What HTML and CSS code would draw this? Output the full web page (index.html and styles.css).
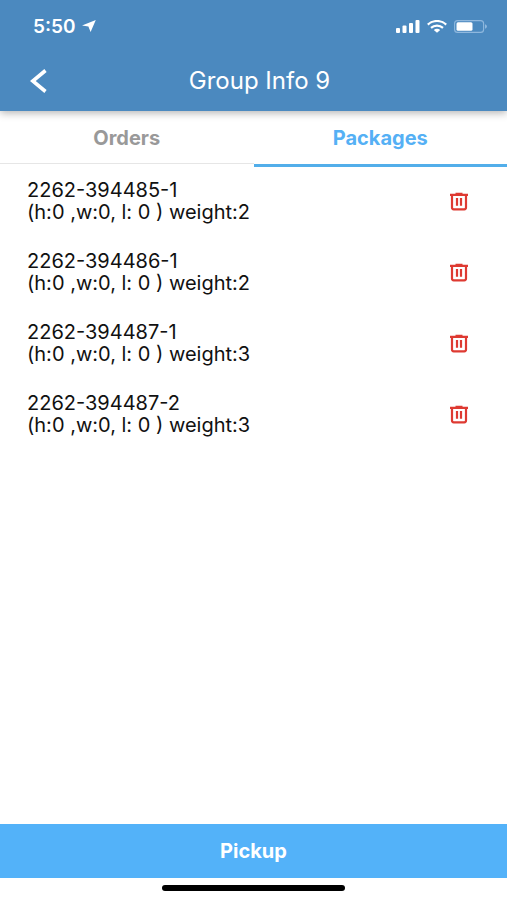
FILE: index.html
```html
<!DOCTYPE html>
<html lang="en">
<head>
    <meta charset="UTF-8">
    <meta name="viewport" content="width=device-width, initial-scale=1.0">
    <title>Group Info 9</title>
    <link rel="stylesheet" href="styles.css">
</head>
<body>
    <!-- Shared icon for the package rows -->
    <svg class="sprite" aria-hidden="true">
        <symbol id="trash" viewBox="0 0 20 20">
            <path d="M1 3.8h18M6.5 2.8h7M3 4v12.6a1.7 1.7 0 0 0 1.7 1.7h10.6a1.7 1.7 0 0 0 1.7-1.7V4M8 7v7.8M12 7v7.8" fill="none" stroke="currentColor" stroke-width="2.2"/>
        </symbol>
    </svg>

    <header class="header">
        <div class="status-bar">
            <div class="status-time">
                <span>5:50</span>
                <svg width="14" height="12" viewBox="0 0 14 12"><path d="M13.8 0 0 5.6 6.4 6.6 8.6 12z" fill="#fff"/></svg>
            </div>
            <div class="status-icons">
                <svg width="24" height="13" viewBox="0 0 24 13" fill="#fff">
                    <rect x="0" y="8" width="4" height="5" rx="1"/>
                    <rect x="6.5" y="5.5" width="4" height="7.5" rx="1"/>
                    <rect x="13" y="3" width="4" height="10" rx="1"/>
                    <rect x="19.5" y="0" width="4" height="13" rx="1"/>
                </svg>
                <svg width="20" height="13" viewBox="0 0 20 13" fill="none" stroke="#fff" stroke-width="2.2">
                    <path d="M0.8 4.6C6-0.2 14-0.2 19.2 4.6M4 7.9C7.4 4.9 12.6 4.9 16 7.9"/>
                    <path d="M6.8 9.9C8.6 8.4 11.4 8.4 13.2 9.9L10 12.8z" fill="#fff" stroke="none"/>
                </svg>
                <svg width="34" height="13" viewBox="0 0 34 13">
                    <rect x="0.6" y="0.6" width="29" height="11.8" rx="3" fill="none" stroke="#8fb8de" stroke-width="1.1"/>
                    <rect x="2.5" y="2.2" width="16" height="8.6" rx="1.5" fill="#fff"/>
                    <path d="M31 4.3c2.6 0.8 2.6 3.6 0 4.4z" fill="#8fb8de"/>
                </svg>
            </div>
        </div>
        <div class="nav-bar">
            <button class="back-btn" type="button" aria-label="Back">
                <svg width="18" height="24" viewBox="0 0 18 24"><path d="M15.5 1.5 2.8 12l12.7 10.5" fill="none" stroke="#fff" stroke-width="3.6"/></svg>
            </button>
            <h1 class="title">Group Info 9</h1>
        </div>
    </header>

    <nav class="tabs">
        <button class="tab" type="button">Orders</button>
        <button class="tab active" type="button">Packages</button>
    </nav>

    <main class="packages">
        <ul class="package-list">
            <li class="package">
                <p>2262-394485-1<br>(h:0 ,w:0, l: 0 ) weight:2</p>
                <button class="delete-btn" type="button" aria-label="Delete 2262-394485-1"><svg width="20" height="20"><use href="#trash"/></svg></button>
            </li>
            <li class="package">
                <p>2262-394486-1<br>(h:0 ,w:0, l: 0 ) weight:2</p>
                <button class="delete-btn" type="button" aria-label="Delete 2262-394486-1"><svg width="20" height="20"><use href="#trash"/></svg></button>
            </li>
            <li class="package">
                <p>2262-394487-1<br>(h:0 ,w:0, l: 0 ) weight:3</p>
                <button class="delete-btn" type="button" aria-label="Delete 2262-394487-1"><svg width="20" height="20"><use href="#trash"/></svg></button>
            </li>
            <li class="package">
                <p>2262-394487-2<br>(h:0 ,w:0, l: 0 ) weight:3</p>
                <button class="delete-btn" type="button" aria-label="Delete 2262-394487-2"><svg width="20" height="20"><use href="#trash"/></svg></button>
            </li>
        </ul>
    </main>

    <footer class="footer">
        <button class="pickup-btn" type="button">Pickup</button>
        <div class="home-indicator"></div>
    </footer>
</body>
</html>
```
FILE: styles.css
```css
* {
    box-sizing: border-box;
}

body {
    margin: 0;
    min-height: 100vh;
    display: flex;
    flex-direction: column;
    font-family: Inter, "Liberation Sans", sans-serif;
    font-size: 20px;
    color: #111;
    background-color: #fff;
}

button {
    padding: 0;
    border: none;
    background: none;
    font: inherit;
    color: inherit;
    cursor: pointer;
}

svg {
    display: block;
}

.sprite {
    position: absolute;
    width: 0;
    height: 0;
}

/* Header */
.header {
    position: relative; /* keeps the shadow above the tabs */
    background-color: #4b89bf;
    color: #fff;
    box-shadow: 0 2px 8px rgba(0, 0, 0, 0.3);
}

.status-bar {
    display: flex;
    justify-content: space-between;
    align-items: center;
    height: 52px;
    padding: 0 19px 0 33px;
}

.status-time {
    display: flex;
    align-items: center;
    gap: 6px;
    font-size: 19px;
    font-weight: 600;
}

.status-icons {
    display: flex;
    gap: 7px;
}

.nav-bar {
    display: grid;
    grid-template-columns: 60px 1fr 48px;
    align-items: center;
    height: 59px;
    padding-bottom: 2px;
}

.back-btn {
    padding-left: 30px;
}

.title {
    margin: 0;
    font-size: 24px;
    font-weight: 400;
    text-align: center;
}

/* Tabs */
.tabs {
    display: flex;
    height: 56px;
}

.tab {
    flex: 1;
    padding-top: 1px;
    border-bottom: 3px solid transparent;
    box-shadow: inset 0 -1px #e6e6e6;
    font-weight: 700;
    color: #999;
}

.tab.active {
    border-bottom-color: #52aeea;
    box-shadow: none;
    color: #55b0f5;
}

/* Package rows */
.packages {
    flex: 1;
}

.package-list {
    margin: 0;
    padding: 0;
    list-style: none;
}

.package {
    display: flex;
    justify-content: space-between;
    align-items: center;
    padding: 12px 38px 15px 27px;
}

.package p {
    margin: 0;
    line-height: 22px;
}

.delete-btn {
    color: #de3a32;
}

/* Footer */
.pickup-btn {
    display: block;
    width: 100%;
    height: 54px;
    background-color: #53b2f9;
    color: #fff;
    font-weight: 700;
}

.home-indicator {
    width: 36%;
    height: 6px;
    margin: 7px auto 9px;
    border-radius: 3px;
    background-color: #000;
}
```
